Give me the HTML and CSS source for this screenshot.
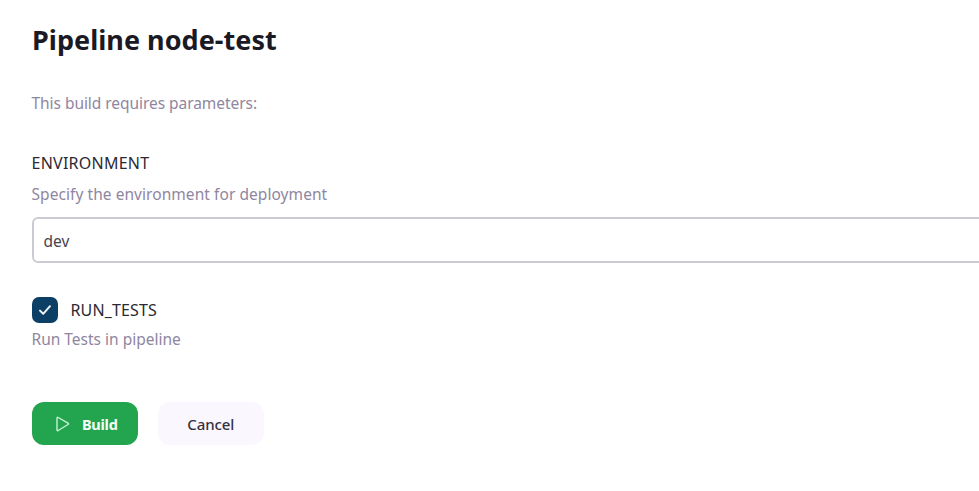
FILE: index.html
```html
<!DOCTYPE html>
<html lang="en">
<head>
<meta charset="utf-8">
<title>Pipeline node-test</title>
<link rel="stylesheet" href="styles.css">
</head>
<body>
<main class="page">
  <h1 class="title">Pipeline node-test</h1>
  <p class="intro">This build requires parameters:</p>
  <form class="form">
    <label class="name" for="env">ENVIRONMENT</label>
    <p class="description">Specify the environment for deployment</p>
    <div class="field" id="env">dev</div>
    <div class="check-row">
      <span class="checkbox"><svg viewBox="0 0 26 26" width="26" height="26"><path d="M8 13.6l3.2 3.2 6.8-7.6"/></svg></span>
      <span class="check-name">RUN_TESTS</span>
    </div>
    <p class="description check-desc">Run Tests in pipeline</p>
    <div class="actions">
      <button type="button" class="button build"><svg viewBox="0 0 16 16" width="16" height="16"><path d="M2 2.1Q2 .8 3.2 1.5L13 7.1Q14 7.8 13 8.5L3.2 14.5Q2 15.1 2 13.8Z"/></svg><span>Build</span></button>
      <button type="button" class="button cancel">Cancel</button>
    </div>
  </form>
</main>
</body>
</html>
```
FILE: styles.css
```css
* { box-sizing: border-box; }
body { margin: 0; background: #fff; color: #2b2933; font-family: "Noto Sans", sans-serif; font-size: 16px; overflow: hidden; }
.page { padding: 21px 0 0 31.5px; }
.title { margin: 0; padding-left: 0.5px; color: #1b1924; font-size: 27px; line-height: 38px; letter-spacing: 0.03px; white-space: nowrap; }
.intro { margin: 32px 0 0; line-height: 24px; font-size: 15.5px; letter-spacing: -0.05px; color: #8f869f; }
.name { display: block; margin-top: 36px; line-height: 24px; letter-spacing: 0.25px; }
.description { margin: 7px 0 0; line-height: 24px; font-size: 15.5px; letter-spacing: 0.06px; color: #8f869f; }
.field { width: 980px; height: 46px; margin-top: 11px; padding: 0 10px; border: 2px solid #cdcad3; border-radius: 6px; font-size: 15.5px; line-height: 44px; color: #45434c; }
.check-row { display: flex; align-items: center; gap: 13px; height: 26px; margin-top: 34px; }
.check-name { letter-spacing: 0.15px; }
.checkbox { width: 26px; height: 26px; border-radius: 7px; background: #0b3f66; }
.checkbox svg { display: block; }
.checkbox path { fill: none; stroke: #edf5fa; stroke-width: 2; stroke-linecap: round; stroke-linejoin: round; }
.check-desc { margin-top: 4px; letter-spacing: 0; }
.actions { display: flex; gap: 19.5px; margin-top: 51px; }
.button { display: flex; align-items: center; justify-content: center; width: 106.5px; height: 43px; padding: 0; border: 0; border-radius: 12px; font: 500 15px "Noto Sans", sans-serif; letter-spacing: -0.1px; color: #35323e; }
.build { gap: 11px; padding-left: 3px; background: #22a54e; color: #f4fff7; font-size: 14.5px; font-weight: 700; letter-spacing: -0.25px; }
.build path { fill: none; stroke: #c9f2d5; stroke-width: 1.4; stroke-linejoin: round; }
.cancel { background: #faf7ff; }
```
